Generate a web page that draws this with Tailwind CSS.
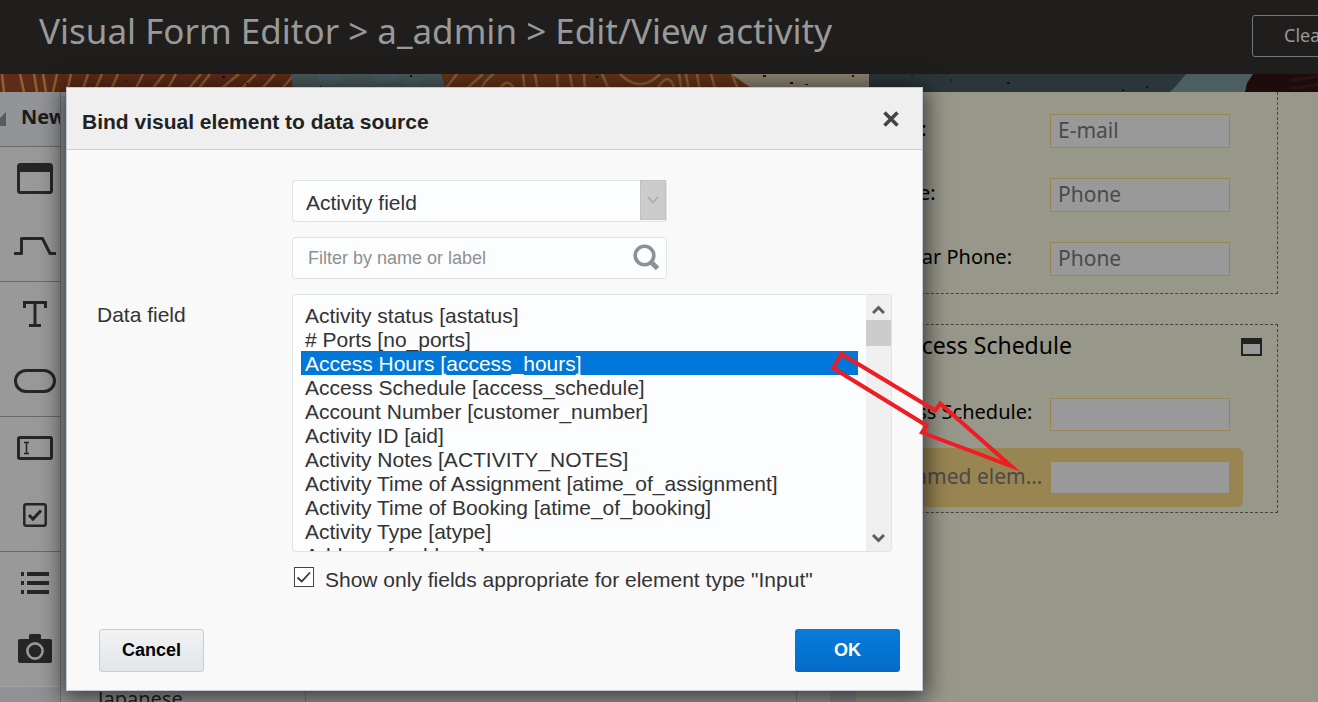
<!DOCTYPE html>
<html lang="en">
<head>
<meta charset="utf-8">
<title>Visual Form Editor</title>
<script src="https://cdn.jsdelivr.net/npm/@tailwindcss/browser@4"></script>
</head>
<body class="relative flex h-screen flex-col overflow-hidden bg-[#97978a] font-['Noto_Sans','Open_Sans',sans-serif] text-black">

<header class="flex h-[74px] shrink-0 items-start bg-[#1f1e1c] text-[#999]">
  <h1 class="flex-1 truncate pl-[39px] pt-[7px] text-[35px] leading-[48px]">Visual Form Editor &gt; a_admin &gt; Edit/View activity</h1>
  <div class="w-[66px] shrink-0 overflow-hidden pt-[15px]">
    <button class="h-[42px] w-[110px] rounded-[3px] border border-[#70777f] pb-0.5 pl-[31px] text-left text-[18px]">Clear</button>
  </div>
</header>

<svg class="block h-[18px] w-full shrink-0" viewBox="0 0 1318 18" preserveAspectRatio="none" aria-hidden="true">
  <rect width="1318" height="18" fill="#5f2a17"/>
  <g fill="none" stroke="#8a6334" stroke-width="2.5">
    <path d="M2 0l2 18M20 0l4 18M34 0l3 18M43 0l3 18M57 0l-4 18M71 0l-4 18M88 0l-6 18M102 0l-8 18M118 0l-8 18M143 0l-9 18M164 0l-14 18M176 0l-10 18M201 0l-15 18M210 0l-14 18M239 0l-22 18M256 0l-18 18M275 0l-16 18M293 2l-14 16"/>
  </g>
  <path d="M291 0h152l6 18H293z" fill="#4b595a"/>
  <path d="M318 0h20l8 6-12 5-16-4zM370 0h30l-4 8-20 2zM405 4h18l-5 9h-14z" fill="#4c5d66"/>
  <path d="M441 0h290l42 18H447z" fill="#643419"/>
  <g fill="none" stroke="#8a6334" stroke-width="2.5">
    <path d="M457 0l-14 18M483 0l-20 18M494 0q-10 6-14 18M523 0l2 18M535 0l3 18M557 0l1 18M570 0l3 18M584 0l1 18M602 0l8 18M620 0q20 20 40 0M498 18q8-16 16-4M655 18q15-26 20 0M679 0l3 18M686 0l3 18M697 0l3 18M711 0l5 18M732 0l7 18"/>
  </g>
  <path d="M731 0h139v18H757z" fill="#8d8371"/>
  <path d="M869 0h319l-12 18H869z" fill="#2b363b"/>
  <path d="M1186 0h68l-7 8-1 10h-76l6-6z" fill="#4c5e61"/>
  <path d="M1253 0h65v18h-73l2-8z" fill="#1d0c0c"/>
  <path d="M1290 5l28-4v3l-25 4zM1288 13l30-4v3l-26 4z" fill="#2a1112"/>
  <g fill="#161413">
    <path d="M763 1h3v2h-3zM790 8h3v2h-3zM805 10h3v1h-3zM852 1h2v2h-2zM320 12h1v2h-1zM410 1h2v2h-2zM596 2h2v2h-2zM911 1h2v1h-2zM951 5h1v2h-1zM1007 8h3v2h-3zM1122 15h2v2h-2zM1146 12h2v2h-2zM222 2h3v2h-3zM246 9h2v1h-2zM126 6h1v2h-1z"/>
  </g>
</svg>

<main class="flex min-h-0 flex-1">
  <nav class="flex w-[61px] shrink-0 flex-col overflow-hidden border-r border-[#707478] bg-[#999] text-[#262626]" aria-label="Elements">
    <div class="flex h-[55px] shrink-0 items-center gap-[15px] border-b border-[#6a6a6a] bg-[#929497]">
      <svg class="h-[14px] w-[6px] shrink-0" viewBox="0 0 6 14" fill="#585b5e" aria-hidden="true"><path d="M6 0v14H0V6z"/></svg>
      <span class="pb-1 text-[20px] leading-7 font-bold text-[#1b1b1b]">New</span>
    </div>
    <div class="grid h-[135px] shrink-0 grid-rows-2 border-b border-[#6a6a6a] pl-[9px]">
      <button class="grid place-items-center pb-1" aria-label="Section">
        <svg class="h-8 w-9" viewBox="0 0 36 32"><rect x="1.5" y="1.5" width="33" height="28" rx="2" fill="none" stroke="currentColor" stroke-width="3"/><path d="M1 1h34v8H1z" fill="currentColor"/></svg>
      </button>
      <button class="grid place-items-center pb-1" aria-label="Tab">
        <svg class="h-5 w-[42px]" viewBox="0 0 42 20" fill="none" stroke="currentColor" stroke-width="3" stroke-linejoin="round"><path d="M0 17.500h7.500V2.500h21L36 17.500h6"/></svg>
      </button>
    </div>
    <div class="grid h-[135px] shrink-0 grid-rows-2 border-b border-[#6a6a6a] pl-[9px]">
      <button class="grid place-items-center pb-1" aria-label="Text">
        <svg class="h-7 w-6" viewBox="0 0 24 28" fill="none" stroke="currentColor" stroke-width="3"><path d="M1.500 8V2.500h21V8M12 2v23M6 25.500h12"/></svg>
      </button>
      <button class="grid place-items-center pb-1" aria-label="Button">
        <svg class="h-6 w-[42px]" viewBox="0 0 42 24" fill="none" stroke="currentColor" stroke-width="3"><rect x="1.500" y="1.500" width="39" height="21" rx="10.500"/></svg>
      </button>
    </div>
    <div class="grid h-[135px] shrink-0 grid-rows-2 border-b border-[#6a6a6a] pl-[9px]">
      <button class="grid place-items-center pb-1.5" aria-label="Input">
        <svg class="h-6 w-9" viewBox="0 0 36 24" fill="none" stroke="currentColor"><rect x="1.500" y="1.500" width="33" height="21" rx="1.500" stroke-width="3"/><path d="M7 6.500h5M7 17.500h5M9.500 6.500v11" stroke-width="1.500"/></svg>
      </button>
      <button class="grid place-items-center pb-1.5" aria-label="Check box">
        <svg class="h-6 w-6" viewBox="0 0 24 24" fill="none" stroke="currentColor" stroke-width="2.500"><rect x="1.300" y="1.300" width="21.400" height="21.400" rx="2"/><path d="M6 12l4 4 8-8.500" stroke-width="3"/></svg>
      </button>
    </div>
    <div class="grid h-[135px] shrink-0 grid-rows-2 border-b border-[#a2a4a6] pl-[9px]">
      <button class="grid place-items-center pb-1.5" aria-label="List">
        <svg class="h-[22px] w-7" viewBox="0 0 28 22" fill="currentColor"><path d="M0 0h3v4H0zM6 0h22v4H6zM0 9h3v4H0zM6 9h22v4H6zM0 18h3v4H0zM6 18h22v4H6z"/></svg>
      </button>
      <button class="grid place-items-center pb-2" aria-label="Image">
        <svg class="h-[29px] w-[34px]" viewBox="0 0 34 29"><path d="M2 5h9V1.500Q11 0 12.500 0h9Q23 0 23 1.500V5h9q2 0 2 2v20q0 2-2 2H2q-2 0-2-2V7q0-2 2-2z" fill="currentColor"/><circle cx="17" cy="17" r="7.600" fill="none" stroke="#999" stroke-width="2.600"/></svg>
      </button>
    </div>
    <div class="flex-1 bg-[#8f9194]"></div>
  </nav>

  <section class="flex min-w-0 flex-1 flex-col bg-[#999]" aria-label="Translations">
    <div class="mt-1 h-[63px] shrink-0 border-y border-[#858789] bg-[#959698]"></div>
    <div class="flex flex-1 items-end overflow-hidden">
      <div class="h-full w-[245px] shrink-0 border-r border-[#7c7c7c]">
        <div class="flex h-full items-end pl-[37px]"><span class="h-[15px] text-[20px] leading-6 text-[#222]">Japanese</span></div>
      </div>
      <div class="h-full flex-1"></div>
      <div class="h-full w-[34px] border-l border-[#7c7c7c]"></div>
      <div class="h-full w-[26px] bg-[#8b8b8b]"></div>
    </div>
  </section>

  <section class="w-[462px] shrink-0 bg-[#97978a] text-[20px] leading-7" aria-label="Form preview">
    <div class="mr-10 flex h-[202px] flex-col gap-[30px] border-r border-b border-dashed border-[#444] pt-[22px] pl-[14px]">
      <div class="flex items-center"><label for="mail" class="w-[180px] pb-1">Email:</label><input id="mail" placeholder="E-mail" class="h-[34px] w-[180px] border border-[#998552] bg-[#999] px-[7px] pb-[3px] text-[21px] placeholder:text-[#4a4a4a]"></div>
      <div class="flex items-center"><label for="ph" class="w-[180px] pb-1">Phone:</label><input id="ph" placeholder="Phone" class="h-[34px] w-[180px] border border-[#998552] bg-[#999] px-[7px] pb-[3px] text-[21px] placeholder:text-[#4a4a4a]"></div>
      <div class="flex items-center"><label for="cell" class="w-[180px] pb-1">Cellular Phone:</label><input id="cell" placeholder="Phone" class="h-[34px] w-[180px] border border-[#998552] bg-[#999] px-[7px] pb-[3px] text-[21px] placeholder:text-[#4a4a4a]"></div>
    </div>
    <div class="mt-[30px] mr-10 h-[189px] border-y border-r border-dashed border-[#444]">
      <div class="flex items-center justify-between pt-[6px] pr-[15px] pl-[40px]">
        <h2 class="pt-px pb-0.5 text-[23px] leading-[27px]">Access Schedule</h2>
        <svg class="mt-[2px] h-[18px] w-[21px]" viewBox="0 0 21 18" aria-hidden="true"><path d="M0 0h21v18H0z" fill="#222"/><path d="M2 6h17v10H2z" fill="#999"/></svg>
      </div>
      <div class="mt-[37px] flex items-center pl-[18px]"><label for="sch" class="w-[176px] pb-[5px]">Access Schedule:</label><input id="sch" class="h-[33px] w-[180px] border border-[#998552] bg-[#999]"></div>
      <div class="mt-[17px] mr-[34px] flex h-[59px] items-center rounded-r-md bg-[#998552] pl-[18px]"><label for="un" class="w-[177px] pb-1 text-[21px] text-[#4a4a4a]">Unnamed elem…</label><input id="un" class="h-[31px] w-[178px] bg-[#999]"></div>
    </div>
  </section>
</main>

<div role="dialog" aria-modal="true" aria-labelledby="dlg-title" class="absolute top-[87px] left-[66px] flex h-[604px] w-[857px] flex-col border border-[#bfcad6] bg-[#f9f9f9] font-['Liberation_Sans',Arial,sans-serif] text-[21px] text-[#333] shadow-[0_4px_22px_4px_rgba(0,0,0,0.6)]">
  <div class="flex h-[62px] items-center justify-between border-b border-[#c4ced7] bg-[#efefef] pr-[23px] pl-[15px]">
    <h2 id="dlg-title" class="pt-1.5 text-[21px] leading-6 font-bold text-[#222]">Bind visual element to data source</h2>
    <button aria-label="Close" class="p-0"><svg class="h-4 w-4" viewBox="0 0 16 16" stroke="#444" stroke-width="3.600"><path d="M1.500 1.500l13 13M14.500 1.500l-13 13"/></svg></button>
  </div>

  <div class="flex flex-1 pt-[30px] pl-[30px]">
    <label for="fields" class="w-[195px] shrink-0 pt-[123px] leading-6">Data field</label>
    <div class="flex w-[600px] flex-col">
      <div class="relative h-[42px] w-[375px]">
        <select aria-label="Field kind" class="h-full w-full appearance-none rounded-[3px] border border-[#dfe4e7] bg-[#fcfdfe] px-[13px] pt-[3px] text-[21px]"><option>Activity field</option></select>
        <span class="pointer-events-none absolute top-0 right-px grid h-10 w-[26px] place-items-center border border-[#c0c3c6] bg-[#ccc]">
          <svg class="h-2 w-3" viewBox="0 0 12 8" fill="none" stroke="#aaa" stroke-width="1.500"><path d="M1 1l5 5.500L11 1"/></svg>
        </span>
      </div>
      <div class="mt-[15px] flex h-[42px] w-[375px] items-center rounded-[3px] border border-[#dfe4e7] bg-[#fcfdfe] pr-[6px] pl-[15px]">
        <input aria-label="Filter" placeholder="Filter by name or label" class="min-w-0 flex-1 bg-transparent text-[18px] placeholder:text-[#8e9092]">
        <svg class="mb-0.5 h-7 w-7" viewBox="0 0 28 28" fill="none" stroke="#8c9194" aria-hidden="true"><circle cx="12.500" cy="12.500" r="9.300" stroke-width="3.600"/><path d="M19 19l6.500 6.500" stroke-width="5"/></svg>
      </div>
      <div class="mt-[15px] flex h-[258px] overflow-hidden rounded-[3px] border border-[#dfe4e7] bg-[#fcfdfe]">
        <select id="fields" size="10" class="h-full min-w-0 flex-1 overflow-y-scroll px-2 pt-2 text-[21px] [scrollbar-width:none]">
          <option class="h-6 min-h-0 px-1 pt-px pb-0 leading-6">Activity status [astatus]</option>
          <option class="h-6 min-h-0 px-1 pt-px pb-0 leading-6"># Ports [no_ports]</option>
          <option selected class="h-6 min-h-0 bg-[#0077d9]! bg-linear-to-r from-[#0077d9] to-[#0077d9] px-1 pt-px pb-0 leading-6 text-white!">Access Hours [access_hours]</option>
          <option class="h-6 min-h-0 px-1 pt-px pb-0 leading-6">Access Schedule [access_schedule]</option>
          <option class="h-6 min-h-0 px-1 pt-px pb-0 leading-6">Account Number [customer_number]</option>
          <option class="h-6 min-h-0 px-1 pt-px pb-0 leading-6">Activity ID [aid]</option>
          <option class="h-6 min-h-0 px-1 pt-px pb-0 leading-6">Activity Notes [ACTIVITY_NOTES]</option>
          <option class="h-6 min-h-0 px-1 pt-px pb-0 leading-6">Activity Time of Assignment [atime_of_assignment]</option>
          <option class="h-6 min-h-0 px-1 pt-px pb-0 leading-6">Activity Time of Booking [atime_of_booking]</option>
          <option class="h-6 min-h-0 px-1 pt-px pb-0 leading-6">Activity Type [atype]</option>
          <option class="h-6 min-h-0 px-1 pt-px pb-0 leading-6">Address [caddress]</option>
        </select>
        <div class="flex w-[25px] shrink-0 flex-col items-center bg-[#efefef]" aria-hidden="true">
          <svg class="mt-[10px] h-[9px] w-[13px]" viewBox="0 0 13 9" fill="none" stroke="#5c5c5c" stroke-width="3"><path d="M1 8l5.500-5.500L12 8"/></svg>
          <span class="mt-[6px] h-[26px] w-full bg-[#ccc]"></span>
          <span class="flex-1"></span>
          <svg class="mb-[8px] h-[9px] w-[13px]" viewBox="0 0 13 9" fill="none" stroke="#5c5c5c" stroke-width="3"><path d="M1 1l5.500 5.500L12 1"/></svg>
        </div>
      </div>
      <div class="mt-[15px] flex items-start gap-[11px] pl-[2px]">
        <span class="grid h-5 w-5">
          <input id="only" type="checkbox" checked class="col-start-1 row-start-1 h-5 w-5 appearance-none border border-[#444] bg-white">
          <svg class="pointer-events-none col-start-1 row-start-1 h-5 w-5" viewBox="0 0 20 20" fill="none" stroke="#333" stroke-width="1.800"><path d="M3.500 10.500l4.200 4L16 5.500"/></svg>
        </span>
        <label for="only" class="pt-px leading-6">Show only fields appropriate for element type "Input"</label>
      </div>
    </div>
  </div>

  <div class="flex justify-between pr-[22px] pb-[18px] pl-8">
    <button class="h-[43px] w-[105px] rounded-[3px] border border-[#c4ced7] bg-linear-to-b from-[#f1f2f3] to-[#e1e6ea] text-[18px] font-bold text-black">Cancel</button>
    <button class="h-[43px] w-[105px] rounded-[3px] bg-linear-to-b from-[#077bdc] to-[#046cc8] text-[18px] font-bold text-white">OK</button>
  </div>
</div>

<svg class="pointer-events-none absolute top-[340px] left-[820px] h-[140px] w-[210px]" viewBox="820 340 210 140" fill="none" stroke="#ee1c25" stroke-width="4" stroke-miterlimit="10" aria-hidden="true">
  <path d="M841.500 354L935.300 410.500L940.200 403.500L1011 466L922 432.500L926.500 425.500L833 368z"/>
</svg>
</body>
</html>
